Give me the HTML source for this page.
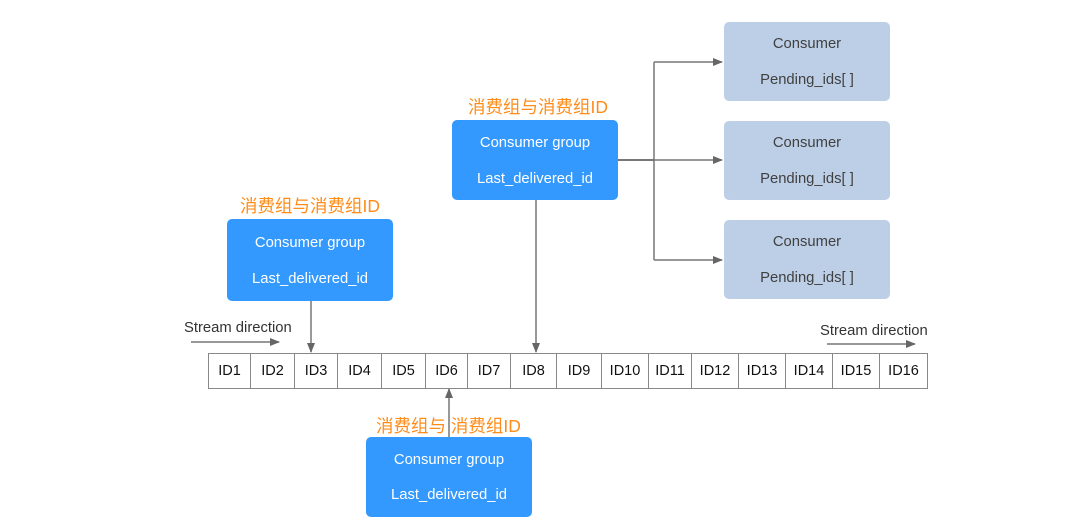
<!DOCTYPE html><html><head><meta charset="utf-8"><style>
body{margin:0;width:1092px;height:526px;background:#fff;position:relative;overflow:hidden;font-family:"Liberation Sans",Arial,sans-serif}
.b{position:absolute;width:166px;height:80px;border-radius:5px;background:#3399fe;color:#fff;font-size:14.8px;text-align:center}
.c{background:#bdcfe7;color:#404040}
.b div{position:absolute;left:0;right:0}
.l{position:absolute;color:#ff8c1a;font-size:17.5px;font-family:"Liberation Sans","Noto Sans CJK SC",sans-serif;white-space:nowrap}
.t{position:absolute;font-size:14.8px;color:#333}
.cell{position:absolute;top:354px;height:34px;line-height:34px;font-size:14.5px;color:#111;text-align:center;border-right:1px solid #888}
</style></head><body>
<svg width="1092" height="526" style="position:absolute;left:0;top:0">
<defs><marker id="a" markerWidth="10" markerHeight="8" refX="9" refY="4" orient="auto" markerUnits="userSpaceOnUse"><path d="M0,0L10,4L0,8z" fill="#666"/></marker></defs>
<g stroke="#777" stroke-width="1.5" fill="none">
<path d="M311 301V352" marker-end="url(#a)"/>
<path d="M536 200V352" marker-end="url(#a)"/>
<path d="M449 437V389" marker-end="url(#a)"/>
<path d="M618 160H654" stroke-width="2"/>
<path d="M654 62V260"/>
<path d="M654 62H722" marker-end="url(#a)"/>
<path d="M654 160H722" marker-end="url(#a)"/>
<path d="M654 260H722" marker-end="url(#a)"/>
<path d="M191 342H279" marker-end="url(#a)"/>
<path d="M827 344H915" marker-end="url(#a)"/>
</g>
<rect x="208.5" y="353.5" width="719" height="35" fill="none" stroke="#888"/>
</svg>
<div class="t" style="left:184px;top:320px">Stream direction</div>
<div class="t" style="left:820px;top:323px">Stream direction</div>
<div class="cell" style="left:209px;width:41px">ID1</div>
<div class="cell" style="left:251px;width:43px">ID2</div>
<div class="cell" style="left:295px;width:42px">ID3</div>
<div class="cell" style="left:338px;width:43px">ID4</div>
<div class="cell" style="left:382px;width:43px">ID5</div>
<div class="cell" style="left:426px;width:41px">ID6</div>
<div class="cell" style="left:468px;width:42px">ID7</div>
<div class="cell" style="left:511px;width:45px">ID8</div>
<div class="cell" style="left:557px;width:44px">ID9</div>
<div class="cell" style="left:602px;width:46px">ID10</div>
<div class="cell" style="left:649px;width:42px">ID11</div>
<div class="cell" style="left:692px;width:46px">ID12</div>
<div class="cell" style="left:739px;width:46px">ID13</div>
<div class="cell" style="left:786px;width:46px">ID14</div>
<div class="cell" style="left:833px;width:46px">ID15</div>
<div class="cell" style="left:880px;width:47px;border-right:none">ID16</div>
<div class="l" style="left:240px;top:193px">消费组与消费组ID</div>
<div class="l" style="left:468px;top:94px">消费组与消费组ID</div>
<div class="l" style="left:376px;top:413px">消费组与 消费组ID</div>
<div class="b" style="left:227px;top:219px;height:82px"><div style="top:16px">Consumer group</div><div style="top:52px">Last_delivered_id</div></div>
<div class="b" style="left:452px;top:120px"><div style="top:15px">Consumer group</div><div style="top:51px">Last_delivered_id</div></div>
<div class="b" style="left:366px;top:437px;height:80px"><div style="top:15px">Consumer group</div><div style="top:50px">Last_delivered_id</div></div>
<div class="b c" style="left:724px;top:22px;height:79px"><div style="top:14px">Consumer</div><div style="top:50px">Pending_ids[ ]</div></div>
<div class="b c" style="left:724px;top:121px;height:79px"><div style="top:14px">Consumer</div><div style="top:50px">Pending_ids[ ]</div></div>
<div class="b c" style="left:724px;top:220px;height:79px"><div style="top:14px">Consumer</div><div style="top:50px">Pending_ids[ ]</div></div>
</body></html>
